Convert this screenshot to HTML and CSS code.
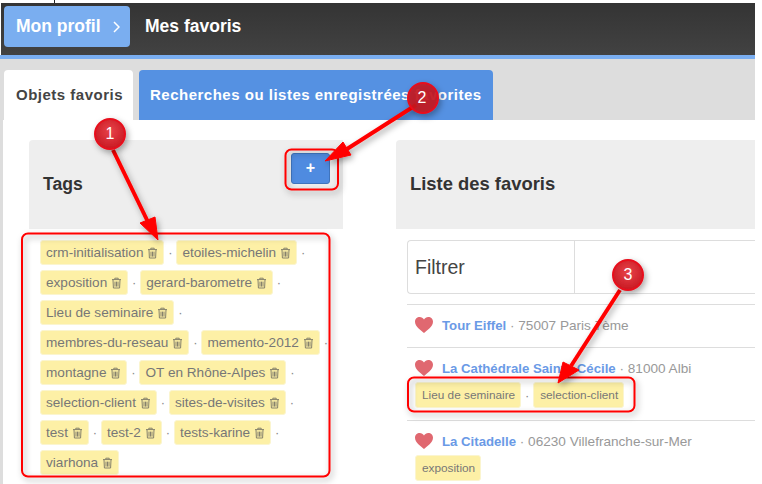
FILE: index.html
```html
<!DOCTYPE html>
<html lang="fr">
<head>
<meta charset="utf-8">
<title>Mes favoris</title>
<link rel="stylesheet" href="styles.css">
</head>
<body>
<svg width="0" height="0" class="defs">
  <defs>
    <symbol id="trash" viewBox="0 0 11 12">
      <path d="M1 2.6h9M3.8 2.4V1.2h3.4v1.2M2 2.8l.4 8.2h6.2l.4-8.2M4 4.6V9.6M5.5 4.6V9.6M7 4.6V9.6" fill="none" stroke="currentColor" stroke-width="1"/>
    </symbol>
    <symbol id="heart" viewBox="0 0 18 16">
      <path d="M9 16C6 13.4 0 9.600 0 4.800 0 2 2.100 0 4.700 0 6.500 0 8.100 1 9 2.500 9.900 1 11.500 0 13.300 0 15.900 0 18 2 18 4.800 18 9.600 12 13.400 9 16Z" fill="currentColor"/>
    </symbol>
  </defs>
</svg>
<div class="page">
  <div class="topstrip"><span class="tick"></span></div>
  <header class="header">
    <a class="crumb">Mon profil <svg class="chev" viewBox="0 0 7 12" width="7" height="12"><path d="M1 1l5 5-5 5" fill="none" stroke="currentColor" stroke-width="1.500"/></svg></a>
    <h1 class="title">Mes favoris</h1>
  </header>
  <div class="tabs">
    <div class="tab tab-active">Objets favoris</div>
    <div class="tab tab-other">Recherches ou listes enregistrées favorites</div>
  </div>
  <main class="content">
    <section class="col-tags">
      <div class="panel-head tags-head">
        <h2 class="panel-title">Tags</h2>
        <button class="add">+</button>
      </div>
      <div class="taglist">
        <span class="item"><span class="tag">crm-initialisation <svg class="ico"><use href="#trash"/></svg></span><i class="sep">·</i></span>
        <span class="item"><span class="tag">etoiles-michelin <svg class="ico"><use href="#trash"/></svg></span><i class="sep">·</i></span>
        <span class="item"><span class="tag">exposition <svg class="ico"><use href="#trash"/></svg></span><i class="sep">·</i></span>
        <span class="item"><span class="tag">gerard-barometre <svg class="ico"><use href="#trash"/></svg></span><i class="sep">·</i></span>
        <span class="item"><span class="tag">Lieu de seminaire <svg class="ico"><use href="#trash"/></svg></span><i class="sep">·</i></span>
        <span class="item"><span class="tag">membres-du-reseau <svg class="ico"><use href="#trash"/></svg></span><i class="sep">·</i></span>
        <span class="item"><span class="tag">memento-2012 <svg class="ico"><use href="#trash"/></svg></span><i class="sep">·</i></span>
        <span class="item"><span class="tag">montagne <svg class="ico"><use href="#trash"/></svg></span><i class="sep">·</i></span>
        <span class="item"><span class="tag">OT en Rhône-Alpes <svg class="ico"><use href="#trash"/></svg></span><i class="sep">·</i></span>
        <span class="item"><span class="tag">selection-client <svg class="ico"><use href="#trash"/></svg></span><i class="sep">·</i></span>
        <span class="item"><span class="tag">sites-de-visites <svg class="ico"><use href="#trash"/></svg></span><i class="sep">·</i></span>
        <span class="item"><span class="tag">test <svg class="ico"><use href="#trash"/></svg></span><i class="sep">·</i></span>
        <span class="item"><span class="tag">test-2 <svg class="ico"><use href="#trash"/></svg></span><i class="sep">·</i></span>
        <span class="item"><span class="tag">tests-karine <svg class="ico"><use href="#trash"/></svg></span><i class="sep">·</i></span>
        <span class="item"><span class="tag">viarhona <svg class="ico"><use href="#trash"/></svg></span></span>
      </div>
    </section>
    <section class="col-list">
      <div class="panel-head list-head"><h2 class="panel-title">Liste des favoris</h2></div>
      <div class="listbody">
        <div class="filter"><label class="filter-label">Filtrer</label><span class="filter-input"></span></div>
        <div class="fav fav-first">
          <div class="fav-line"><svg class="heart"><use href="#heart"/></svg><a class="fav-link">Tour Eiffel</a><span class="fav-meta"> · 75007 Paris 7ème</span></div>
        </div>
        <div class="fav">
          <div class="fav-line"><svg class="heart"><use href="#heart"/></svg><a class="fav-link">La Cathédrale Sainte-Cécile</a><span class="fav-meta"> · 81000 Albi</span></div>
          <div class="fav-tags"><span class="tag tag-sm">Lieu de seminaire</span><i class="sep">·</i><span class="tag tag-sm">selection-client</span></div>
        </div>
        <div class="fav">
          <div class="fav-line"><svg class="heart"><use href="#heart"/></svg><a class="fav-link">La Citadelle</a><span class="fav-meta"> · 06230 Villefranche-sur-Mer</span></div>
          <div class="fav-tags"><span class="tag tag-sm">exposition</span></div>
        </div>
      </div>
    </section>
  </main>
  <svg class="notes" width="755" height="484" viewBox="0 0 755 484">
    <defs>
      <filter id="sh" x="-20%" y="-20%" width="140%" height="140%"><feDropShadow dx="2" dy="3" stdDeviation="3" flood-color="#000" flood-opacity=".35"/></filter>
      <radialGradient id="ball" cx=".5" cy=".4" r=".65"><stop offset="0" stop-color="#e8434a"/><stop offset="1" stop-color="#c5161f"/></radialGradient>
    </defs>
    <g fill="none" stroke="#f00" stroke-width="2" filter="url(#sh)">
      <rect x="22" y="233.500" width="307.500" height="243" rx="6"/>
      <rect x="285.500" y="149.500" width="52.500" height="40" rx="6"/>
      <rect x="408" y="377.500" width="226.500" height="34" rx="6"/>
    </g>
    <g filter="url(#sh)" fill="#f00" stroke="#f00">
      <path d="M113 150L148 222" stroke-width="4"/><path d="M158 240L140 223 155 217Z"/>
      <path d="M416 105L347 149" stroke-width="4"/><path d="M325 161L343 142 351 155Z"/>
      <path d="M620 290L571 366" stroke-width="4"/><path d="M558 383L563 362 579 370Z"/>
    </g>
    <g filter="url(#sh)" stroke="#e8101c" stroke-width="2">
      <circle cx="110" cy="134" r="15" fill="url(#ball)"/>
      <circle cx="423" cy="98" r="15" fill="#c5161f" fill-opacity=".9"/>
      <circle cx="628" cy="275" r="15" fill="url(#ball)"/>
    </g>
    <g class="num">
      <text x="110" y="139">1</text>
      <text x="422" y="103">2</text>
      <text x="628" y="280">3</text>
    </g>
  </svg>
</div>
</body>
</html>
```
FILE: styles.css
```css
* { box-sizing: border-box; }
html, body { margin: 0; padding: 0; height: 484px; overflow: hidden; background: #fff; }
body { font-family: "Liberation Sans", Arial, sans-serif; }
.defs { position: absolute; }
.page { position: relative; width: 755px; height: 484px; overflow: hidden; }
.topstrip { height: 3px; }
.tick { display: block; width: 1px; height: 3px; margin-left: 54px; background: #222; }
.header { display: flex; align-items: flex-start; height: 52px; margin-left: 1px; padding: 3px 0 0 3px; background: linear-gradient(#343434, #424242); }
.crumb { display: flex; align-items: center; gap: 12px; height: 41px; width: 126px; padding-left: 12px; background: #7aaef0; border-radius: 4px; color: #fff; font-size: 17.500px; font-weight: bold; }
.chev { margin-top: 1px; }
.title { margin: 0 0 0 15px; line-height: 41px; color: #fff; font-size: 17.500px; font-weight: bold; }
.tabs { display: flex; gap: 6px; height: 65px; padding: 11px 0 0 4px; border-top: 4px solid #7aaef0; background: #ddd; }
.tab { height: 50px; line-height: 50px; border-radius: 4px 4px 0 0; font-size: 15px; font-weight: bold; letter-spacing: .5px; white-space: nowrap; }
.tab-active { width: 129px; padding-left: 12px; background: #fff; color: #444; }
.tab-other { width: 354px; padding-left: 11px; background: #5591e2; color: #fff; }
.content { display: flex; height: 364px; border-left: 3px solid #ddd; background: #fff; padding: 20px 0 0 26px; }
.col-tags { width: 314px; margin-right: 53px; }
.col-list { flex: 1; }
.panel-head { display: flex; height: 89px; padding-left: 14px; background: #eee; border-radius: 4px 0 0 0; position: relative; }
.tags-head { justify-content: space-between; padding-right: 13px; }
.panel-title { margin: 0; line-height: 88px; color: #333; font-size: 18.400px; font-weight: bold; }
.tags-head .panel-title { font-size: 17.600px; }
.add { width: 39px; height: 31px; margin-top: 13px; padding: 0 0 2px; border: 1px solid #3f74bd; border-radius: 3px; background: #4f8be0; color: #fff; font: bold 16px/26px "Liberation Sans", sans-serif; }
.taglist { display: flex; flex-wrap: wrap; align-content: flex-start; row-gap: 5px; width: 292px; margin: 11px 0 0 11px; }
.item { display: flex; align-items: center; }
.tag { display: inline-flex; align-items: center; height: 25px; padding: 0 5px; gap: 3px; background: #fdf0a6; border: 1px solid #fbf5cf; border-radius: 3px; color: #777; font-size: 13.600px; white-space: nowrap; }
.ico { display: block; width: 11px; height: 12px; color: #85816c; margin-left: 1px; }
.sep { display: block; width: 12px; text-align: center; font-style: normal; color: #888; font-size: 13px; }
.tag-sm { height: 26px; font-size: 11.800px; padding: 0 5px 0 6px; }
.listbody { padding-left: 11px; margin-top: 11px; }
.filter { display: flex; height: 54px; border: 1px solid #ddd; border-radius: 4px 0 0 4px; border-right: 0; }
.filter-label { width: 167px; padding-left: 7px; line-height: 52px; color: #444; font-size: 19.500px; border-right: 1px solid #ddd; }
.fav { border-top: 1px solid #ddd; height: 73px; padding: 9px 0 0 8px; }
.fav-first { height: 43px; margin-top: 10px; }
.fav-line { display: flex; align-items: center; height: 22px; font-size: 13.600px; white-space: pre; }
.heart { width: 18px; height: 16px; margin-right: 9px; color: #e06870; }
.fav-link { color: #6a9ae6; font-weight: bold; font-size: 13.200px; }
.fav-meta { color: #999; }
.fav-tags { display: flex; align-items: center; margin-top: 3px; }
.num text { fill: #fff; font-family: "Liberation Sans", sans-serif; font-size: 16px; text-anchor: middle; }
.notes { position: absolute; left: 0; top: 0; pointer-events: none; }
```
